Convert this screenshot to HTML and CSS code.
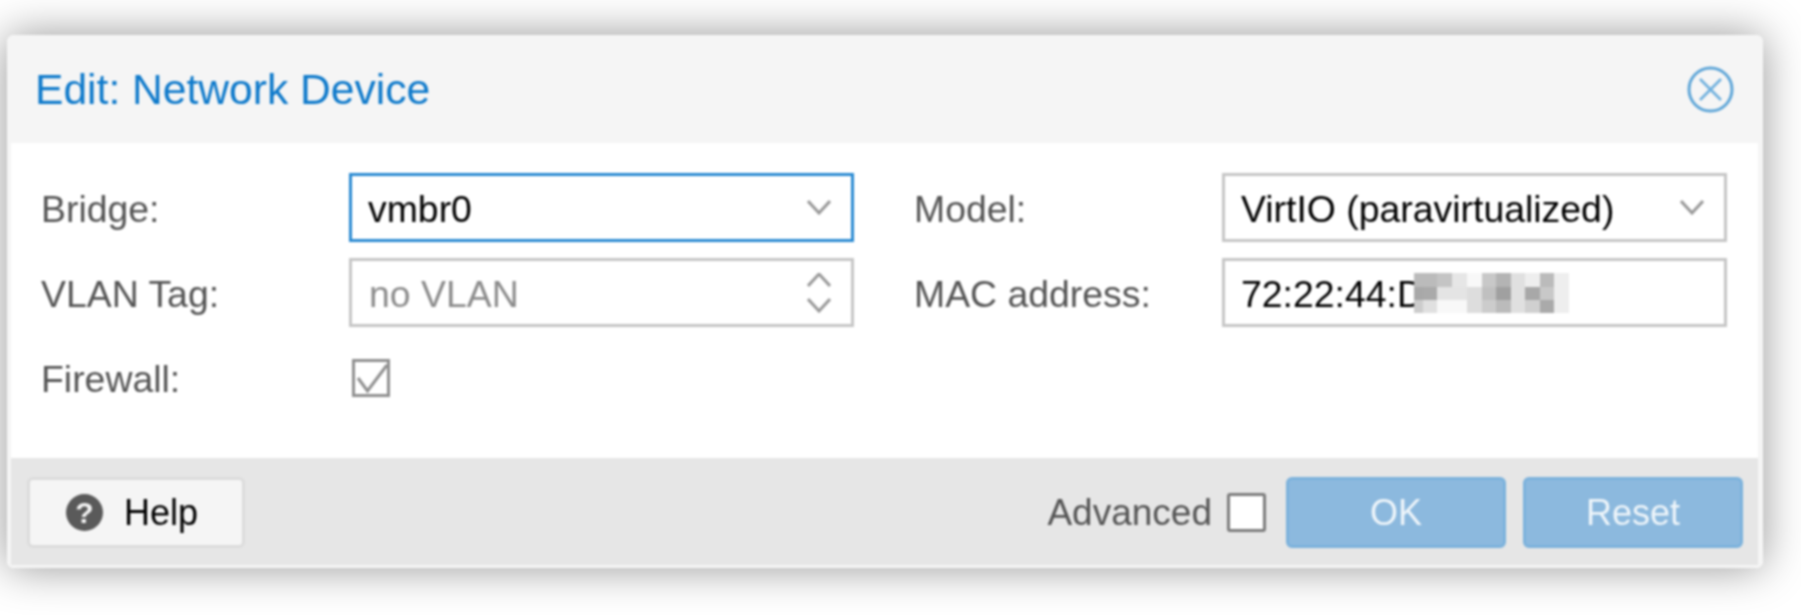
FILE: index.html
```html
<!DOCTYPE html>
<html lang="en">

<head>
  <meta charset="UTF-8">
  <title>Edit: Network Device</title>
  <link rel="stylesheet" href="styles.css">
</head>

<body>
  <div class="window">
    <div class="window-header">
      <span class="window-title">Edit: Network Device</span>
      <svg class="close-icon" viewBox="0 0 47 47" width="47" height="47">
        <circle cx="23.5" cy="23.5" r="21.5" fill="none" stroke="#5fa6d8" stroke-width="3"/>
        <path d="M13 13 L34 34 M34 13 L13 34" fill="none" stroke="#6fb0de" stroke-width="2.6"/>
      </svg>
    </div>

    <div class="window-body">
      <div class="form-row">
        <label class="field-label">Bridge:</label>
        <div class="field field-focus">
          <span class="field-value">vmbr0</span>
          <svg class="chevron" viewBox="0 0 24 15" width="24" height="15"><path d="M1 1 L12 13 L23 1"/></svg>
        </div>
      </div>
      <div class="form-row">
        <label class="field-label">Model:</label>
        <div class="field">
          <span class="field-value">VirtIO (paravirtualized)</span>
          <svg class="chevron" viewBox="0 0 24 15" width="24" height="15"><path d="M1 1 L12 13 L23 1"/></svg>
        </div>
      </div>
      <div class="form-row">
        <label class="field-label">VLAN Tag:</label>
        <div class="field">
          <span class="field-value field-empty">no VLAN</span>
          <svg class="spinner" viewBox="0 0 24 40" width="24" height="40">
            <path d="M1 13 L12 1 L23 13"/>
            <path d="M1 26 L12 38 L23 26"/>
          </svg>
        </div>
      </div>
      <div class="form-row">
        <label class="field-label">MAC address:</label>
        <div class="field">
          <span class="field-value mac-visible">72:22:44:D</span>
          <svg class="mac-blur" viewBox="0 0 155 40" width="155" height="40">
            <rect x="0" y="0" width="23" height="14" fill="#bbb"/>
            <rect x="23" y="0" width="15" height="14" fill="#c4c4c4"/>
            <rect x="38" y="0" width="15" height="14" fill="#e6e6e6"/>
            <rect x="53" y="0" width="15" height="14" fill="#f8f8f8"/>
            <rect x="68" y="0" width="14" height="14" fill="#c8c8c8"/>
            <rect x="82" y="0" width="15" height="14" fill="#b4b4b4"/>
            <rect x="97" y="0" width="14" height="14" fill="#e0e0e0"/>
            <rect x="111" y="0" width="15" height="14" fill="#eeeeee"/>
            <rect x="126" y="0" width="14" height="14" fill="#bbb"/>
            <rect x="140" y="0" width="15" height="14" fill="#eeeeee"/>
            <rect x="0" y="14" width="9" height="13" fill="#a8a8a8"/>
            <rect x="9" y="14" width="14" height="13" fill="#aaa"/>
            <rect x="23" y="14" width="15" height="13" fill="#e4e4e4"/>
            <rect x="38" y="14" width="15" height="13" fill="#e4e4e4"/>
            <rect x="53" y="14" width="15" height="13" fill="#ddd"/>
            <rect x="68" y="14" width="14" height="13" fill="#c0c0c0"/>
            <rect x="82" y="14" width="15" height="13" fill="#a0a0a0"/>
            <rect x="97" y="14" width="14" height="13" fill="#e0e0e0"/>
            <rect x="111" y="14" width="15" height="13" fill="#a8a8a8"/>
            <rect x="126" y="14" width="14" height="13" fill="#c8c8c8"/>
            <rect x="140" y="14" width="15" height="13" fill="#eeeeee"/>
            <rect x="0" y="27" width="9" height="13" fill="#ccc"/>
            <rect x="9" y="27" width="14" height="13" fill="#e0e0e0"/>
            <rect x="23" y="27" width="30" height="13" fill="#f8f8f8"/>
            <rect x="53" y="27" width="15" height="13" fill="#ddd"/>
            <rect x="68" y="27" width="14" height="13" fill="#ccc"/>
            <rect x="82" y="27" width="15" height="13" fill="#bbb"/>
            <rect x="97" y="27" width="14" height="13" fill="#e0e0e0"/>
            <rect x="111" y="27" width="15" height="13" fill="#d0d0d0"/>
            <rect x="126" y="27" width="14" height="13" fill="#aaa"/>
            <rect x="140" y="27" width="15" height="13" fill="#eeeeee"/>
          </svg>
        </div>
      </div>
      <div class="form-row">
        <label class="field-label">Firewall:</label>
        <div class="checkbox checkbox-checked">
          <svg viewBox="0 0 38 38" width="38" height="38"><path d="M6 19 L15.5 32 L35 6"/></svg>
        </div>
      </div>
    </div>

    <div class="window-footer">
      <button class="btn btn-help"><span class="help-icon">?</span>Help</button>
      <div class="footer-right">
        <span class="advanced-label">Advanced</span>
        <div class="checkbox checkbox-plain"></div>
        <button class="btn btn-primary">OK</button>
        <button class="btn btn-primary">Reset</button>
      </div>
    </div>
  </div>
</body>

</html>
```

FILE: styles.css
```css
html, body {
  margin: 0;
  background: #fff;
  overflow: hidden;
}

body {
  height: 615px;
  font-family: "Liberation Sans", Arial, sans-serif;
  font-size: 37.4px;
}

.window {
  box-sizing: border-box;
  width: 1756px;
  margin: 35px 0 0 7px;
  border: solid #f5f5f5;
  border-width: 0 5px 3px 4px;
  border-radius: 7px;
  box-shadow: 0 0 44px rgba(0, 0, 0, 0.42);
  filter: blur(0.9px);
}

.window-header {
  display: flex;
  align-items: center;
  justify-content: space-between;
  height: 108px;
  padding: 0 24px 0 24px;
  background: #f5f5f5;
}

.window-title {
  font-size: 42.6px;
  color: #0f7acb;
}

.window-body {
  display: grid;
  grid-template-columns: 813px 813px;
  grid-auto-rows: 69px;
  column-gap: 60px;
  row-gap: 16px;
  height: 315px;
  box-sizing: border-box;
  padding: 30px 30px 0;
  background: #fff;
}

.form-row {
  display: flex;
  align-items: center;
}

.field-label {
  width: 308px;
  flex: none;
  padding-top: 4px;
  color: #555;
}

.field {
  box-sizing: border-box;
  display: flex;
  align-items: center;
  width: 505px;
  height: 69px;
  padding: 0 20px 0 16px;
  border: 3px solid #c6c6c6;
  background: #fff;
}

.field-focus {
  border-color: #2a8ad2;
}

.field-value {
  flex: 1;
  padding-top: 4px;
  color: #000;
  white-space: nowrap;
}

.field-empty {
  padding-left: 1px;
  color: #8c8c8c;
}

.mac-visible {
  flex: none;
  width: 173px;
}

.mac-blur {
  flex: none;
}

.chevron path,
.spinner path {
  fill: none;
  stroke: #999;
  stroke-width: 3;
}

.checkbox {
  box-sizing: border-box;
  flex: none;
  width: 38px;
  height: 38px;
}

.checkbox-checked {
  margin-left: 3px;
  border: 3px solid #909090;
}

.checkbox-checked svg {
  display: block;
  margin: -3px;
}

.checkbox-checked path {
  fill: none;
  stroke: #909090;
  stroke-width: 3;
}

.checkbox-plain {
  width: 39px;
  height: 39px;
  border: 3px solid #7c7c7c;
  border-radius: 3px;
  background: #fff;
}

.window-footer {
  box-sizing: border-box;
  display: flex;
  align-items: flex-start;
  justify-content: space-between;
  height: 107px;
  padding: 19px 15px 0 16px;
  background: #e6e6e6;
}

.footer-right {
  display: flex;
  align-items: center;
}

.advanced-label {
  margin-right: 15px;
  font-size: 37px;
  color: #555;
}

.btn {
  box-sizing: border-box;
  height: 71px;
  font-family: inherit;
  font-size: 36px;
  border-radius: 6px;
  padding: 0;
}

.btn-help {
  display: flex;
  align-items: center;
  width: 218px;
  padding-left: 36px;
  border: 3px solid #dcdcdc;
  background: #f5f5f5;
  color: #000;
}

.help-icon {
  display: flex;
  align-items: center;
  justify-content: center;
  width: 37px;
  height: 37px;
  margin-right: 21px;
  border-radius: 50%;
  background: #5a5a5a;
  color: #f5f5f5;
  font-size: 30px;
  font-weight: bold;
}

.btn-primary {
  width: 220px;
  margin-left: 17px;
  border: 3px solid #7cb2dc;
  background: #8cb9de;
  color: #eef5fa;
}

.checkbox-plain + .btn-primary {
  margin-left: 20px;
}
```
